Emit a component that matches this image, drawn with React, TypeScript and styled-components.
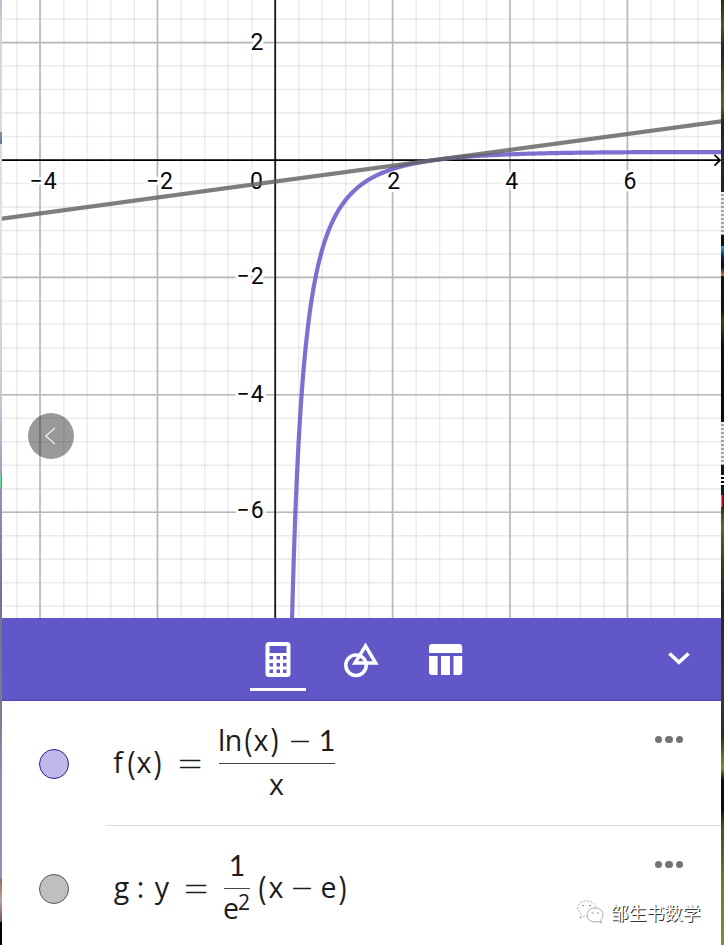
import React from "react";
import styled, { createGlobalStyle } from "styled-components";

const GlobalStyle = createGlobalStyle`
  *, *::before, *::after { box-sizing: border-box; }
  body { margin: 0; background: #fff; overflow: hidden; }
`;

const Screen = styled.div`
  position: relative;
  display: grid;
  grid-template-columns: 2px 719px 3px;
  width: 724px;
  height: 945px;
  overflow: hidden;
`;

const LeftEdge = styled.div`
  background:
    linear-gradient(#8a8f94, #5f7c98) 0 132px / 2px 12px no-repeat,
    linear-gradient(90deg, #7df0b8, #3f8a50) 0 475px / 2px 13px no-repeat,
    linear-gradient(#8f6f62, #b7a49b 50%, #6e564e) 0 879px / 2px 43px no-repeat,
    linear-gradient(#000, #000) 0 922px / 2px 23px no-repeat,
    linear-gradient(#b9bfd0 0, #d3d7db 40px, #dfe2e4 250px, #c5c9d6 400px, #9196ae 490px, #6d7594 600px, #747c8c 700px, #8790ab 780px, #8f97b8 945px);
`;

const RightEdge = styled.div`
  background:
    repeating-linear-gradient(#f0f0f0 0 2px, #a2a2a2 2px 4px) 0 192px / 3px 43px no-repeat,
    linear-gradient(#3aa0d8, #0f1a30 40%, #0c0f18 70%, #c58a4a) 0 246px / 3px 30px no-repeat,
    repeating-linear-gradient(#f0f0f0 0 2px, #a2a2a2 2px 4px) 0 422px / 3px 43px no-repeat,
    repeating-linear-gradient(#fff 0 2px, #05050f 2px 4px) 0 475px / 3px 11px no-repeat,
    linear-gradient(90deg, #e8a070, #b01818 50%, #111) 0 495px / 3px 12px no-repeat,
    linear-gradient(#262c18 0, #4b5a25 25px, #20261a 50px, #5a652c 105px, #1b2224 125px, #252a3b 150px, #0c1210 240px, #10180c 310px, #40401c 322px, #0b100c 345px, #080c0a 420px, #151d12 500px, #5a6c2c 525px, #384424 560px, #1d281a 600px, #35402a 690px, #24301a 735px, #7d9234 768px, #0a0c0e 780px, #0b0d0c 808px, #3d501e 825px, #6b7d33 885px, #7c8d3d 945px);
`;

const Calculator = styled.main`
  display: grid;
  grid-template-rows: 618px 83px 125px 119px;
  background: #fff;
`;

const GraphArea = styled.section`
  position: relative;
  overflow: hidden;
`;

const Plot = styled.svg`
  display: block;
  font: 400 23px Roboto, sans-serif;
`;

const BackButton = styled.button`
  position: absolute;
  left: 26px;
  top: 413px;
  width: 46px;
  height: 46px;
  padding: 0;
  border: 0;
  border-radius: 50%;
  background: rgba(0, 0, 0, 0.4);
  svg { display: block; }
`;

const Toolbar = styled.nav`
  display: grid;
  grid-template-columns: 56px 56px 56px 1fr 56px;
  column-gap: 28px;
  padding: 0 14px 0 248px;
  background: #6157c8;
  border-bottom: 1px solid #5142bb;
`;

const Tab = styled.button<{ $active?: boolean; $column?: number }>`
  display: flex;
  flex-direction: column;
  align-items: center;
  height: 72.5px;
  padding: 20px 0 0;
  border: 0;
  border-bottom: 3.5px solid ${(p) => (p.$active ? "#fff" : "transparent")};
  background: none;
  grid-column: ${(p) => p.$column ?? "auto"};
`;

const Row = styled.section<{ $divided?: boolean }>`
  display: grid;
  grid-template-columns: 104px 1fr 77px;
  position: relative;
  background: #fff;
  & > div:nth-child(n + 2) {
    border-bottom: ${(p) => (p.$divided ? "1.5px solid #dedede" : "none")};
  }
`;

const MarkerCell = styled.div`
  padding: 47.5px 0 0 37px;
`;

const Marker = styled.div<{ $fill: string; $line: string }>`
  width: 30px;
  height: 30px;
  border-radius: 50%;
  border: 1.6px solid ${(p) => p.$line};
  background: ${(p) => p.$fill};
`;

const Formula = styled.div`
  display: flex;
  align-items: flex-start;
  padding-left: 7px;
  font: 400 28.5px/40px "Open Sans", sans-serif;
  color: #1c1c1c;
  white-space: nowrap;
`;

const Term = styled.div<{ $top: number }>`
  display: flex;
  height: 40px;
  margin-top: ${(p) => p.$top}px;
`;

const Glyph = styled.span<{
  $w: number;
  $gap?: number;
  $font?: string;
  $size?: number;
  $weight?: number;
  $sx?: number;
  $sy?: number;
  $dy?: number;
}>`
  display: flex;
  justify-content: center;
  width: ${(p) => p.$w}px;
  margin-left: ${(p) => p.$gap ?? 0}px;
  font-family: ${(p) => p.$font ?? "inherit"};
  font-size: ${(p) => (p.$size ? `${p.$size}px` : "inherit")};
  font-weight: ${(p) => p.$weight ?? "inherit"};
  transform: translateY(${(p) => p.$dy ?? 0}px) scale(${(p) => p.$sx ?? 1}, ${(p) => p.$sy ?? 1});
`;

const Fraction = styled.div<{ $w: number; $gap: number; $top: number }>`
  width: ${(p) => p.$w}px;
  margin: ${(p) => p.$top}px 0 0 ${(p) => p.$gap}px;
`;

const Numerator = styled.div`
  display: flex;
  height: 42px;
  border-bottom: 1.5px solid #444;
  & > span { position: relative; top: -2px; }
`;

const Denominator = styled.div<{ $shift: number; $lift: number }>`
  display: flex;
  height: 36px;
  padding-left: ${(p) => p.$shift}px;
  margin-top: ${(p) => p.$lift}px;
`;

const More = styled.div`
  display: flex;
  justify-content: flex-start;
  gap: 3px;
  padding: 34.5px 0 0 10.8px;
`;

const Dot = styled.i`
  width: 7.5px;
  height: 7.5px;
  border-radius: 50%;
  background: #737373;
`;

const Watermark = styled.div`
  position: absolute;
  left: 575px;
  top: 896.5px;
  display: flex;
  align-items: center;
  gap: 5.5px;
  height: 30px;
  font: 400 18px/30px "Noto Sans CJK SC", sans-serif;
  color: #fff;
  text-shadow: 1px 1px 0 #333;
`;

const X0 = 273.2;
const Y0 = 160;
const U = 58.7;
const px = (x: number) => X0 + x * U;
const py = (y: number) => Y0 - y * U;
const E = Math.E;

const minor = Array.from({ length: 45 }, (_, i) => i - 20);
const curve = Array.from({ length: 320 }, (_, i) => 0.28 + Math.pow(i / 319, 2) * 7.5)
  .map((x, i) => `${i ? "L" : "M"}${px(x).toFixed(2)} ${py((Math.log(x) - 1) / x).toFixed(2)}`)
  .join("");

const labels: [string, number, number][] = [
  ["2", 261.4, 50], ["−2", 261.6, 284], ["−4", 261.6, 401.5], ["−6", 261.6, 518],
  ["−4", 54.6, 188.5], ["−2", 171, 188.5], ["0", 261, 188.5],
  ["2", 398.2, 188.5], ["4", 516.2, 188.5], ["6", 634.4, 188.5],
];

function Graph() {
  return (
    <Plot width="719" height="618" viewBox="0 0 719 618">
      <g stroke="#000" strokeOpacity="0.08" strokeWidth="1.5">
        {minor.map((n) => <path key={`v${n}`} d={`M${px(n * 0.4)} 0V618`} />)}
        {minor.map((n) => <path key={`h${n}`} d={`M0 ${py(n * 0.4)}H719`} />)}
      </g>
      <g stroke="#b8b8b8" strokeWidth="1.6">
        {[-4, -2, 2, 4, 6].map((n) => <path key={`v${n}`} d={`M${px(n) - (n < 0 ? 0.4 : 0)} 0V618`} />)}
        {[2, -2, -4, -6].map((n) => <path key={`h${n}`} d={`M0 ${py(n)}H719`} />)}
      </g>
      <g textAnchor="end" fill="#080808" stroke="#fff" strokeWidth="6" strokeLinejoin="round" paintOrder="stroke">
        {labels.map(([t, x, y], i) => (
          <text key={i} x={x} y={y}>
            {t.length > 1 ? <><tspan letterSpacing="0.9">−</tspan>{t[1]}</> : t}
          </text>
        ))}
      </g>
      <path d="M273.2 0V618" stroke="#161616" strokeWidth="1.8" />
      <path d="M0 160.2H717M712.5 154.8L718 160.2L712.5 165.6" fill="none" stroke="#000" strokeWidth="1.7" />
      <path d={curve} fill="none" stroke="#5b4ec6" strokeOpacity="0.8" strokeWidth="4.2" />
      <path d={`M${px(-5)} ${py((-5 - E) / (E * E))}L${px(8)} ${py((8 - E) / (E * E))}`} stroke="#616161" strokeOpacity="0.82" strokeWidth="4.2" />
    </Plot>
  );
}

const PAREN = { $w: 9, $weight: 400, $sx: 0.95, $sy: 1.14, $dy: 0 };
const EQUAL = { $w: 20, $weight: 300, $sx: 1.55, $sy: 1.23, $dy: 0 };
const MINUS = { $w: 18, $weight: 300, $sx: 1.35, $sy: 1.15 };

export default function App() {
  return (
    <>
      <GlobalStyle />
      <Screen>
        <LeftEdge />
        <Calculator>
          <GraphArea>
            <Graph />
            <BackButton aria-label="Back">
              <svg width="46" height="46" fill="none" stroke="#eee" strokeWidth="1.4">
                <path d="M27 15L17.8 23L27 31" />
              </svg>
            </BackButton>
          </GraphArea>
          <Toolbar>
            <Tab $active aria-label="Algebra">
              <svg width="36" height="44" viewBox="0 0 36 44">
                <path fillRule="evenodd" fill="#fff" d="M9 4H27Q30.5 4 30.5 7.5V36Q30.5 39 27 39H9Q5.5 39 5.500 36V7.5Q5.5 4 9 4ZM9.5 8V15H26.5V8ZM9.5 18V21.5H13V18ZM16.5 18V21.5H20V18ZM23 18V21.5H26.5V18ZM9.5 25V28.5H13V25ZM16.5 25V28.5H20V25ZM23 25V28.5H26.5V25ZM9.5 31.5V35H13V31.5ZM16.5 31.5V35H20V31.5ZM23 31.5V35H26.5V31.5Z" />
              </svg>
            </Tab>
            <Tab aria-label="Tools">
              <svg width="36" height="44" viewBox="0 0 36 44" fill="none" stroke="#fff" strokeWidth="3.5">
                <circle cx="12" cy="27.2" r="10.2" />
                <path d="M21.5 7.800L31.700 25H11Z" />
              </svg>
            </Tab>
            <Tab aria-label="Table">
              <svg width="36" height="44" viewBox="0 0 36 44" fill="#fff">
                <path d="M4 6H31Q34.200 6 34.200 9V15H1V9Q1 6 4 6ZM1 18H9.600V37H4Q1 37 1 34ZM13 18H22V37H13ZM25.500 18H34.200V34Q34.200 37 31.200 37H25.500Z" />
              </svg>
            </Tab>
            <Tab $column={5} aria-label="Collapse">
              <svg width="36" height="44" viewBox="0 0 36 44" fill="none" stroke="#fff" strokeWidth="3.6">
                <path d="M8.5 15.500L18 24.300L27.5 15.500" />
              </svg>
            </Tab>
          </Toolbar>
          <Row $divided>
            <MarkerCell><Marker $fill="#bfb9e9" $line="#2c209d" /></MarkerCell>
            <Formula>
              <Term $top={41}>
                <Glyph $w={10}>f</Glyph>
                <Glyph {...PAREN} $gap={4}>(</Glyph>
                <Glyph $w={14} $gap={1}>x</Glyph>
                <Glyph {...PAREN} $gap={2}>)</Glyph>
                <Glyph {...EQUAL} $gap={18}>=</Glyph>
              </Term>
              <Fraction $w={116} $gap={19} $top={21}>
                <Numerator>
                  <Glyph $w={5}>l</Glyph>
                  <Glyph $w={15} $gap={2}>n</Glyph>
                  <Glyph {...PAREN} $gap={3}>(</Glyph>
                  <Glyph $w={14} $gap={1}>x</Glyph>
                  <Glyph {...PAREN} $gap={2}>)</Glyph>
                  <Glyph {...MINUS} $gap={12}>−</Glyph>
                  <Glyph $w={14} $gap={11} $font="Lato, sans-serif">1</Glyph>
                </Numerator>
                <Denominator $shift={50.5} $lift={0}><Glyph $w={14}>x</Glyph></Denominator>
              </Fraction>
            </Formula>
            <More><Dot /><Dot /><Dot /></More>
          </Row>
          <Row>
            <MarkerCell><Marker $fill="#bfbfbf" $line="#555" /></MarkerCell>
            <Formula>
              <Term $top={41}>
                <Glyph $w={15} $gap={1}>g</Glyph>
                <Glyph $w={5} $gap={9}>:</Glyph>
                <Glyph $w={14} $gap={12}>y</Glyph>
                <Glyph {...EQUAL} $gap={17}>=</Glyph>
              </Term>
              <Fraction $w={26} $gap={18} $top={21}>
                <Numerator><Glyph $w={26} $font="Lato, sans-serif">1</Glyph></Numerator>
                <Denominator $shift={0} $lift={-1}>
                  <Glyph $w={14}>e</Glyph>
                  <Glyph $w={10} $gap={1} $size={21} $dy={-6.5}>2</Glyph>
                </Denominator>
              </Fraction>
              <Term $top={41}>
                <Glyph {...PAREN} $gap={8}>(</Glyph>
                <Glyph $w={14} $gap={2}>x</Glyph>
                <Glyph {...MINUS} $gap={10}>−</Glyph>
                <Glyph $w={14} $gap={10.5}>e</Glyph>
                <Glyph {...PAREN} $gap={2}>)</Glyph>
              </Term>
            </Formula>
            <More><Dot /><Dot /><Dot /></More>
          </Row>
        </Calculator>
        <RightEdge />
        <Watermark>
          <svg width="30" height="28" viewBox="0 0 30 28" fill="#fff" stroke="#888" strokeWidth="0.7">
            <path strokeDasharray="2 1.5" d="M5 20L6.5 16C-1 10 3 3 12 3C18 3 21 7 21 10M5 20L9.5 18H12" />
            <path d="M20 10C25 10 28 13 28 17C28 19 27 21 25.5 22L26.5 25L23 23.5C17 25 12 22 12 17C12 13 15 10 20 10Z" />
            <path fill="none" strokeWidth="1.2" d="M7 7.5H9M14 7.5H16M16.5 15H18.5M22 15H24" />
          </svg>
          邹生书数学
        </Watermark>
      </Screen>
    </>
  );
}
